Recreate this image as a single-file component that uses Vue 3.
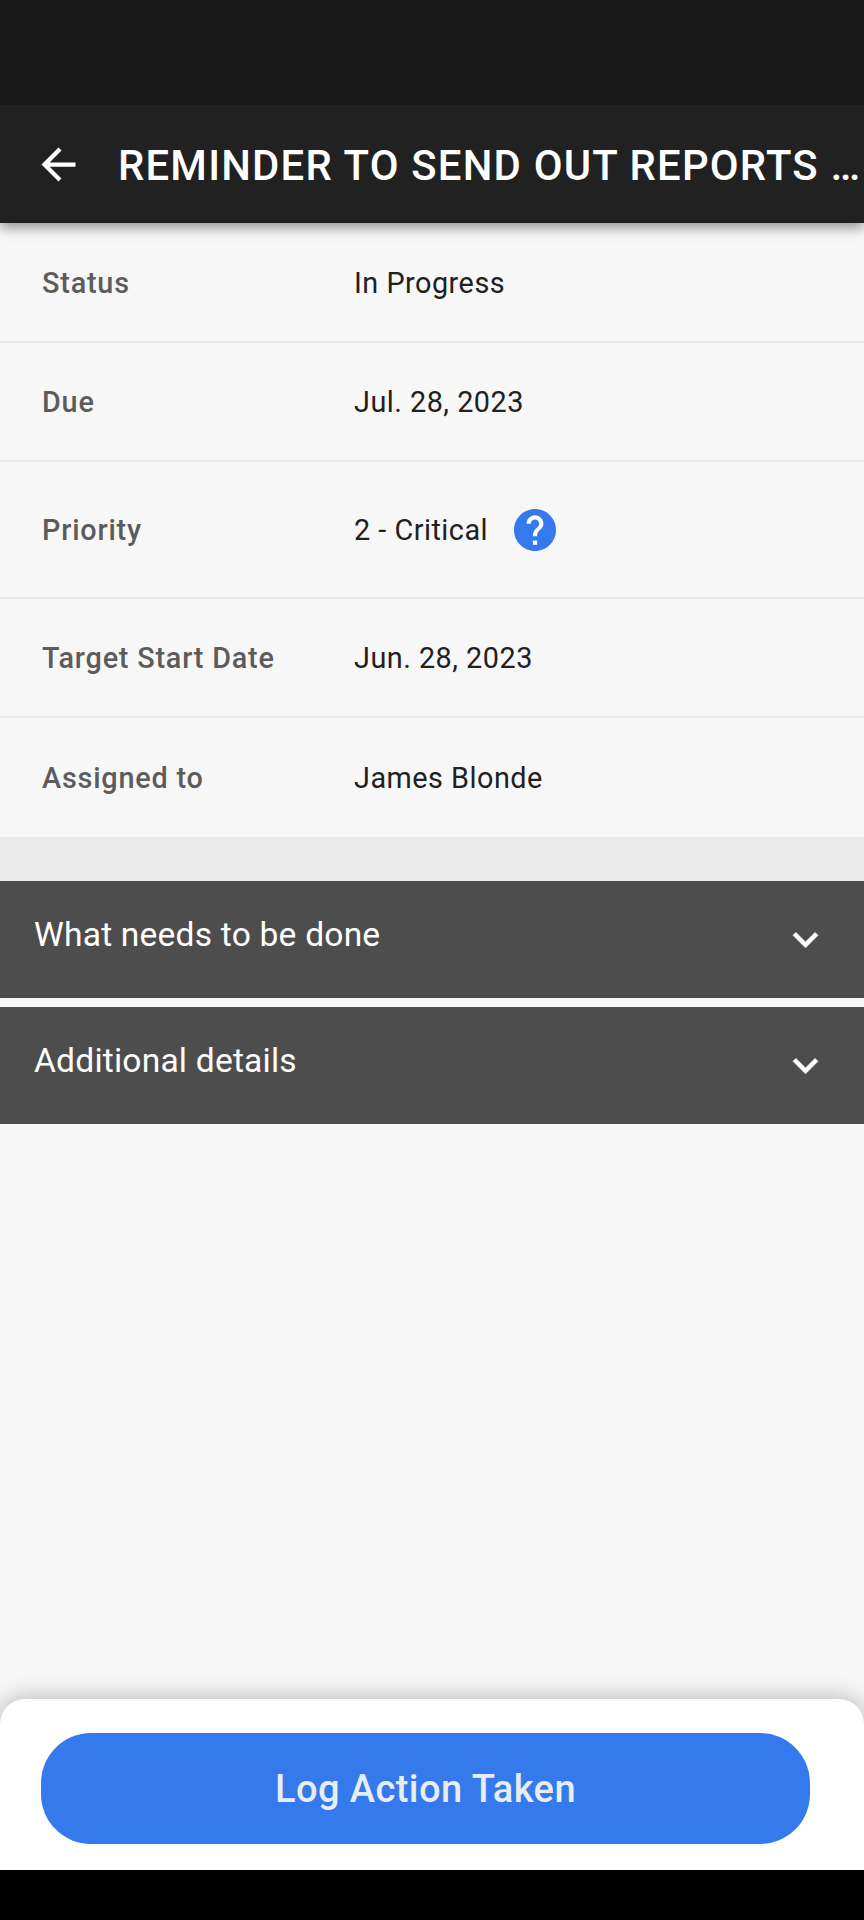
<template>
  <div class="screen">
    <div class="status-bar"></div>
    <header class="app-bar">
      <button class="back" aria-label="Back">
        <svg viewBox="0 0 24 24" width="51" height="51">
          <path d="M20 11H7.83l5.59-5.59L12 4l-8 8 8 8 1.41-1.41L7.83 13H20v-2z" fill="#fff" />
        </svg>
      </button>
      <h1>REMINDER TO SEND OUT REPORTS …</h1>
    </header>

    <main class="content">
      <div v-for="field in fields" :key="field.label" class="row" :class="{ tall: field.help }">
        <span class="label">{{ field.label }}</span>
        <span class="value">{{ field.value }}</span>
        <svg v-if="field.help" class="help" viewBox="2 2 20 20">
          <path
            d="M12 2C6.48 2 2 6.48 2 12s4.48 10 10 10 10-4.48 10-10S17.52 2 12 2z"
            fill="#347aec"
          />
          <path
            d="M13 19h-2v-2h2v2zm2.07-7.75l-.9.92C13.45 12.9 13 13.5 13 15h-2v-.5c0-1.1.45-2.1 1.17-2.83l1.24-1.26c.37-.36.59-.86.59-1.41 0-1.1-.9-2-2-2s-2 .9-2 2H8c0-2.21 1.79-4 4-4s4 1.79 4 4c0 .88-.36 1.68-.93 2.25z"
            fill="#fff"
          />
        </svg>
      </div>

      <div class="divider"></div>

      <section
        v-for="panel in panels"
        :key="panel.title"
        class="panel"
        @click="panel.open = !panel.open"
      >
        <span class="panel-title">{{ panel.title }}</span>
        <svg class="chevron" :class="{ open: panel.open }" viewBox="6 8 12 8">
          <path
            d="M7.41 8.59L12 13.17l4.59-4.58L18 10l-6 6-6-6 1.41-1.41z"
            fill="#fff"
            stroke="#fff"
            stroke-width="0.3"
          />
        </svg>
      </section>
    </main>

    <footer class="sheet">
      <button class="action">Log Action Taken</button>
    </footer>
    <div class="nav-bar"></div>
  </div>
</template>

<script setup>
import { ref } from 'vue';

const fields = [
  { label: 'Status', value: 'In Progress' },
  { label: 'Due', value: 'Jul. 28, 2023' },
  { label: 'Priority', value: '2 - Critical', help: true },
  { label: 'Target Start Date', value: 'Jun. 28, 2023' },
  { label: 'Assigned to', value: 'James Blonde' },
];

const panels = ref([
  { title: 'What needs to be done', open: false },
  { title: 'Additional details', open: false },
]);
</script>

<style>
body {
  margin: 0;
  background: #f7f7f7;
}
</style>

<style scoped>
.screen {
  display: flex;
  flex-direction: column;
  width: 864px;
  height: 1920px;
  overflow: hidden;
  background: #f7f7f7;
  font-family: Roboto, sans-serif;
}

.status-bar {
  flex: none;
  height: 105px;
  background: #191919;
  z-index: 2;
}

.app-bar {
  display: flex;
  flex: none;
  align-items: center;
  height: 118px;
  box-sizing: border-box;
  padding-left: 33px;
  background: #212121;
  box-shadow: 0 5px 12px rgba(0, 0, 0, 0.4);
  z-index: 1;
}

.back {
  display: flex;
  padding: 0;
  border: none;
  background: none;
}

h1 {
  margin: 4px 0 0 34px;
  color: #fff;
  font-size: 41.8px;
  font-weight: 500;
  line-height: 50px;
  letter-spacing: 1.22px;
  white-space: nowrap;
}

.content {
  flex: 1;
}

.row {
  display: flex;
  align-items: center;
  height: 119.5px;
  box-sizing: border-box;
  padding: 2px 0 0 42px;
  border-bottom: 2px solid #ebebeb;
  font-size: 28.8px;
}

.row.tall {
  height: 136.5px;
}

.row:nth-child(5) {
  height: 118.5px;
  border-bottom: none;
}

.label {
  width: 312px;
  color: #5c5c5c;
  font-weight: 500;
  letter-spacing: 0.8px;
}

.value {
  color: #212121;
  letter-spacing: 0.5px;
}

.help {
  width: 42px;
  height: 42px;
  margin-left: 26px;
}

.divider {
  height: 44px;
  background: #eaeaea;
}

.panel {
  display: flex;
  justify-content: space-between;
  height: 117.5px;
  box-sizing: border-box;
  padding: 33px 46px 0 34px;
  margin-bottom: 8.5px;
  background: #4d4d4d;
  color: #fff;
}

.panel-title {
  font-size: 33.6px;
  line-height: 42px;
  letter-spacing: 0.2px;
}

.chevron {
  width: 25px;
  height: 17px;
  margin-top: 17px;
  overflow: visible;
}

.chevron.open {
  transform: rotate(180deg);
}

.sheet {
  flex: none;
  height: 170.5px;
  box-sizing: border-box;
  padding: 34px 54px 0 41px;
  border-radius: 25px 25px 0 0;
  background: #fff;
  box-shadow: 0 0 24px rgba(0, 0, 0, 0.3);
}

.action {
  display: block;
  width: 769px;
  height: 111px;
  padding: 0;
  border: none;
  border-radius: 50px;
  background: #347aec;
  color: #e8ecf5;
  font-family: inherit;
  font-size: 38px;
  font-weight: 500;
  letter-spacing: 0.45px;
}

.nav-bar {
  flex: none;
  height: 50.5px;
  background: #000;
  z-index: 1;
}
</style>
